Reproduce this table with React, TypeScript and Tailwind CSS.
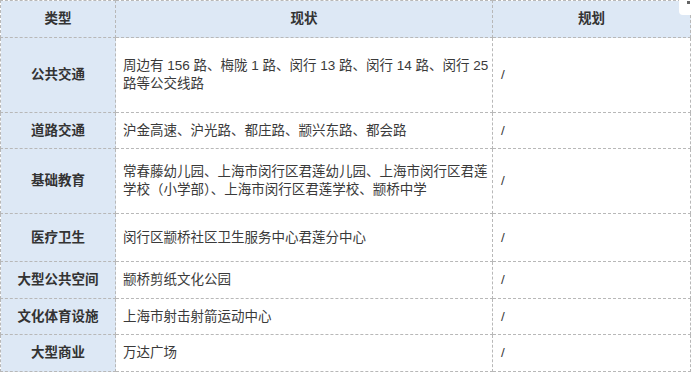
const rows = [
  { type: "公共交通", now: "周边有 156 路、梅陇 1 路、闵行 13 路、闵行 14 路、闵行 25 路等公交线路", plan: "/", h: "h-[75px]" },
  { type: "道路交通", now: "沪金高速、沪光路、都庄路、颛兴东路、都会路", plan: "/", h: "h-[36px]" },
  { type: "基础教育", now: "常春藤幼儿园、上海市闵行区君莲幼儿园、上海市闵行区君莲学校（小学部）、上海市闵行区君莲学校、颛桥中学", plan: "/", h: "h-[65px]" },
  { type: "医疗卫生", now: "闵行区颛桥社区卫生服务中心君莲分中心", plan: "/", h: "h-[48px]" },
  { type: "大型公共空间", now: "颛桥剪纸文化公园", plan: "/", h: "h-[37px]" },
  { type: "文化体育设施", now: "上海市射击射箭运动中心", plan: "/", h: "h-[36px]" },
  { type: "大型商业", now: "万达广场", plan: "/", h: "h-[37px]" },
];

export default function App() {
  return (
    <div className="relative w-[692px] h-[372px] bg-white overflow-hidden font-['Liberation_Sans','Noto_Sans_CJK_SC',sans-serif] text-[13.5px] leading-[18px] text-[#333]">
      <table className="w-[690px] table-fixed border-collapse">
        <colgroup>
          <col className="w-[115px]" />
          <col className="w-[377px]" />
          <col className="w-[198px]" />
        </colgroup>
        <thead>
          <tr className="h-[37px] bg-[#dde8f5]">
            <th className="border border-dashed border-[#b8b8b8] font-bold text-center">类型</th>
            <th className="border border-dashed border-[#b8b8b8] font-bold text-center">现状</th>
            <th className="border border-dashed border-[#b8b8b8] font-bold text-center">规划</th>
          </tr>
        </thead>
        <tbody>
          {rows.map((r) => (
            <tr key={r.type} className={r.h}>
              <td className="border border-dashed border-[#b8b8b8] bg-[#dde8f5] text-center font-bold">{r.type}</td>
              <td className="border border-dashed border-[#b8b8b8] pl-[7px] pr-0 text-[#3a3a3a]">{r.now}</td>
              <td className="border border-dashed border-[#b8b8b8] pl-[8px] text-[#3a3a3a]">{r.plan}</td>
            </tr>
          ))}
        </tbody>
      </table>
      <div className="absolute right-0 top-0 w-[13px] h-[15px] bg-white rounded-bl-[4px]">
        <div className="absolute right-[2px] top-[1px] w-[3px] h-[3px] bg-[#666]" />
      </div>
    </div>
  );
}
